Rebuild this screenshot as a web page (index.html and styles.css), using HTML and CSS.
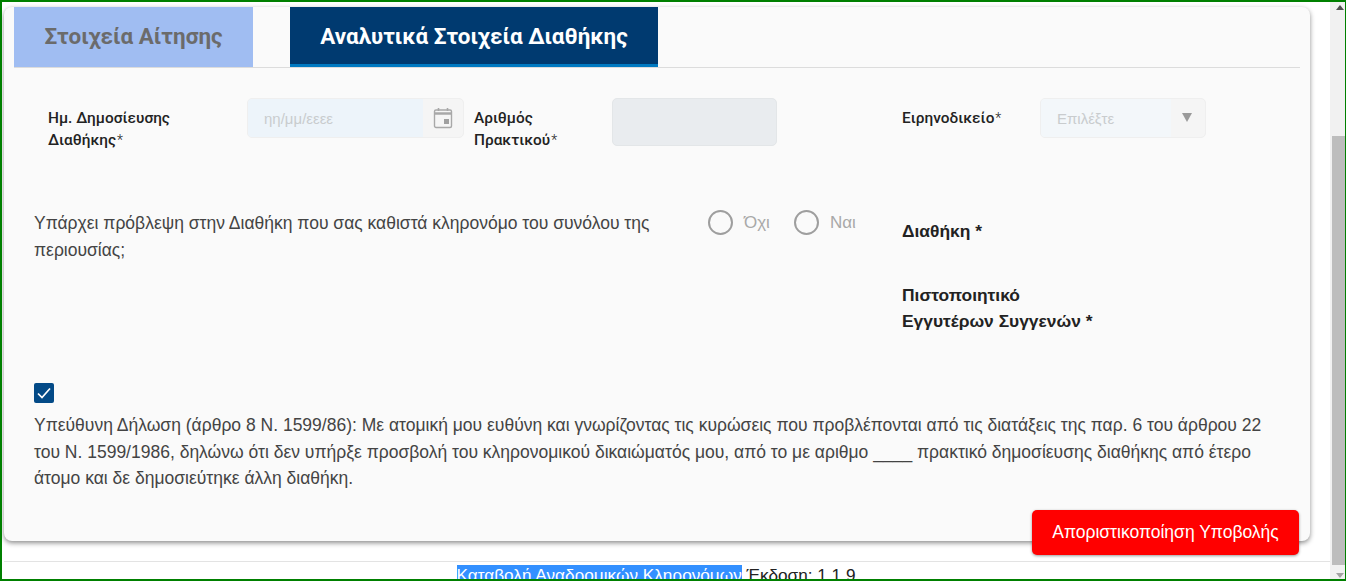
FILE: index.html
```html
<!DOCTYPE html>
<html lang="el">
<head>
  <meta charset="UTF-8">
  <meta name="viewport" content="width=device-width, initial-scale=1.0">
  <title>Αναλυτικά Στοιχεία Διαθήκης</title>
  <link rel="stylesheet" href="styles.css">
</head>
<body>
  <div class="window">
    <div class="page">
      <div class="card">
        <div class="tabs">
          <div class="tab tab-off">Στοιχεία Αίτησης</div>
          <div class="tab tab-on">Αναλυτικά Στοιχεία Διαθήκης</div>
        </div>

        <div class="fields">
          <div class="label label-date">Ημ. Δημοσίευσης Διαθήκης<span class="star">*</span></div>
          <div class="input input-date">
            <span class="placeholder">ηη/μμ/εεεε</span>
            <span class="addon">
              <svg width="20" height="22" viewBox="0 0 20 22" fill="none">
                <rect x="1.5" y="3" width="17" height="17.5" rx="1.5" stroke="#a8a8a8" stroke-width="1.4"/>
                <path d="M1.5 6.5h17" stroke="#a8a8a8" stroke-width="2.4"/>
                <path d="M5.5 1v3M14.5 1v3" stroke="#a8a8a8" stroke-width="1.6"/>
                <rect x="11" y="12" width="5" height="5" fill="#a0a0a0"/>
              </svg>
            </span>
          </div>
          <div class="label label-number">Αριθμός Πρακτικού<span class="star">*</span></div>
          <div class="input-number"></div>
          <div class="label label-court">Ειρηνοδικείο<span class="star">*</span></div>
          <div class="input input-select">
            <span class="placeholder">Επιλέξτε</span>
            <span class="arrow"></span>
          </div>
        </div>

        <div class="question-row">
          <p class="question">Υπάρχει πρόβλεψη στην Διαθήκη που σας καθιστά κληρονόμο του συνόλου της περιουσίας;</p>
          <div class="radios">
            <span class="radio"></span><span class="radio-text">Όχι</span>
            <span class="radio"></span><span class="radio-text">Ναι</span>
          </div>
          <div class="docs">
            <div class="doc doc-will">Διαθήκη *</div>
            <div class="doc doc-cert">Πιστοποιητικό<br>Εγγυτέρων Συγγενών *</div>
          </div>
        </div>

        <div class="declaration">
          <span class="checkbox">
            <svg width="20" height="20" viewBox="0 0 20 20" fill="none">
              <path d="M4 10.5l4 4 8-9" stroke="#fff" stroke-width="1.7"/>
            </svg>
          </span>
          <p>Υπεύθυνη Δήλωση (άρθρο 8 Ν. 1599/86): Με ατομική μου ευθύνη και γνωρίζοντας τις κυρώσεις που προβλέπονται από τις διατάξεις της παρ. 6 του άρθρου 22 του Ν. 1599/1986, δηλώνω ότι δεν υπήρξε προσβολή του κληρονομικού δικαιώματός μου, από το με αριθμο ____ πρακτικό δημοσίευσης διαθήκης από έτερο άτομο και δε δημοσιεύτηκε άλλη διαθήκη.</p>
        </div>

        <button class="submit">Αποριστικοποίηση Υποβολής</button>
      </div>

      <div class="footer">
        <span class="selected">Καταβολή Αναδρομικών Κληρονόμων</span> Έκδοση: 1.1.9
      </div>
    </div>

    <div class="scrollbar">
      <span class="scroll-up"></span>
      <div class="scroll-track"><div class="scroll-thumb"></div></div>
      <span class="scroll-down"></span>
    </div>
  </div>
</body>
</html>
```

FILE: styles.css
```css
html, body {
  margin: 0;
  padding: 0;
  height: 581px;
  overflow: hidden;
}

body {
  font-family: "Liberation Sans", Arial, sans-serif;
  color: #333;
  background: #fff;
}

.window {
  box-sizing: border-box;
  height: 581px;
  display: flex;
  border: 2px solid #008000;
  border-width: 2px 1px 2px 2px;
  overflow: hidden;
}

.page {
  flex: 1;
  min-width: 0;
  display: flex;
  flex-direction: column;
  padding: 5px 0 0 2px;
}

/* card */
.card {
  position: relative;
  box-sizing: border-box;
  width: 1306px;
  height: 534px;
  flex: none;
  padding: 0 10px;
  background: #fafafa;
  border-radius: 8px;
  box-shadow: 0 2px 5px rgba(0, 0, 0, 0.45);
}

.tabs {
  display: flex;
  gap: 37px;
  height: 61px;
  box-sizing: border-box;
  border-bottom: 1px solid #dcdcdc;
}

.tab {
  font-family: Roboto, sans-serif;
  font-size: 22.4px;
  font-weight: 700;
  line-height: 58px;
  text-align: center;
  height: 60px;
  box-sizing: border-box;
}

.tab-off {
  width: 239px;
  background: #a0bdf2;
  color: #6b6b6b;
}

.tab-on {
  width: 368px;
  background: #003a70;
  color: #fff;
  border-bottom: 3px solid #0079c1;
}

/* top fields */
.fields {
  display: flex;
  align-items: flex-start;
  padding-top: 30px;
  height: 120px;
  box-sizing: border-box;
}

.label {
  box-sizing: border-box;
  font-family: Roboto, sans-serif;
  font-size: 15.4px;
  font-weight: 500;
  line-height: 22px;
  color: #222;
  padding-top: 9px;
}

.star {
  margin-left: 1px;
  font-size: 14px;
  font-weight: 300;
}

.label-date {
  width: 199px;
  margin-left: 34px;
  padding-right: 40px;
}

.label-number {
  width: 138px;
  padding-right: 40px;
}

.label-court {
  width: 138px;
  margin-left: 125px;
}

.input {
  display: flex;
  align-items: center;
  box-sizing: border-box;
  height: 40px;
  border: 1px solid #efefef;
  border-radius: 5px;
  background: #f5f5f5;
  overflow: hidden;
}

.input-date {
  width: 217px;
  margin-right: 10px;
}

.placeholder {
  flex: 1;
  align-self: stretch;
  display: flex;
  align-items: center;
  padding-left: 16px;
  font-size: 15px;
  color: #c9ccce;
}

.input-date .placeholder {
  background: #edf4fa;
}

.input-select .placeholder {
  background: #f3f7fa;
}

.addon {
  display: flex;
  justify-content: center;
  width: 40px;
}

.input-number {
  width: 165px;
  height: 48px;
  box-sizing: border-box;
  border: 1px solid #e3e6e8;
  border-radius: 5px;
  background: #e9ecef;
}

.input-select {
  width: 166px;
}

.arrow {
  width: 0;
  height: 0;
  margin: 0 13px 2px 11px;
  border-left: 5px solid transparent;
  border-right: 5px solid transparent;
  border-top: 9px solid #9a9a9a;
}

/* question row */
.question-row {
  display: flex;
  align-items: flex-start;
  height: 195px;
}

.question {
  width: 640px;
  margin: 22px 0 0 20px;
  font-size: 17.5px;
  line-height: 27px;
  color: #444;
}

.radios {
  display: flex;
  align-items: center;
  width: 194px;
  margin: 22px 0 0 34px;
  font-size: 17px;
  color: #a8a8a8;
}

.radio {
  width: 21px;
  height: 21px;
  border: 2px solid #9e9e9e;
  border-radius: 50%;
}

.radio-text {
  margin: 0 24px 0 11px;
}

.doc {
  font-size: 17.4px;
  font-weight: 700;
  color: #222;
  line-height: 26px;
}

.doc-will {
  margin-top: 30px;
}

.doc-cert {
  margin-top: 38px;
}

/* declaration */
.declaration {
  padding-left: 20px;
  padding-right: 20px;
}

.declaration p {
  margin: 9px 0 0;
  font-size: 17.5px;
  line-height: 26.5px;
  color: #444;
}

.checkbox {
  display: flex;
  align-items: center;
  justify-content: center;
  width: 20px;
  height: 20px;
  border-radius: 2px;
  background: #034a87;
}

.submit {
  position: absolute;
  right: 11px;
  bottom: -14px;
  width: 267px;
  height: 45px;
  border: none;
  border-radius: 5px;
  background: #ff0000;
  color: #fff;
  font-family: "Liberation Sans", Arial, sans-serif;
  font-size: 17.5px;
  box-shadow: 0 1px 3px rgba(0, 0, 0, 0.4);
}

/* footer */
.footer {
  margin-top: 20px;
  border-top: 1px solid #e3e3e3;
  text-align: center;
  font-size: 17.2px;
  line-height: 26px;
  color: #222;
  white-space: nowrap;
  padding-right: 22px;
}

.selected {
  background: #3390ff;
  color: #fff;
}

/* scrollbar */
.scrollbar {
  flex: none;
  width: 15px;
  display: flex;
  flex-direction: column;
  background: #f1f1f1;
}

.scroll-track {
  flex: 1;
  padding-top: 117px;
  display: flex;
}

.scroll-thumb {
  flex: 1;
  margin-left: 2px;
  background: #bdbdbd;
}

.scroll-up, .scroll-down {
  flex: none;
  width: 0;
  height: 5px;
  margin-left: 6px;
  border-left: 4.5px solid transparent;
  border-right: 4.5px solid transparent;
  box-sizing: border-box;
}

.scroll-up {
  margin-top: 3px;
  margin-bottom: 9px;
  border-bottom: 5px solid #505050;
}

.scroll-down {
  margin-top: 8px;
  margin-bottom: 1px;
  border-top: 5px solid #a3a3a3;
}
```
